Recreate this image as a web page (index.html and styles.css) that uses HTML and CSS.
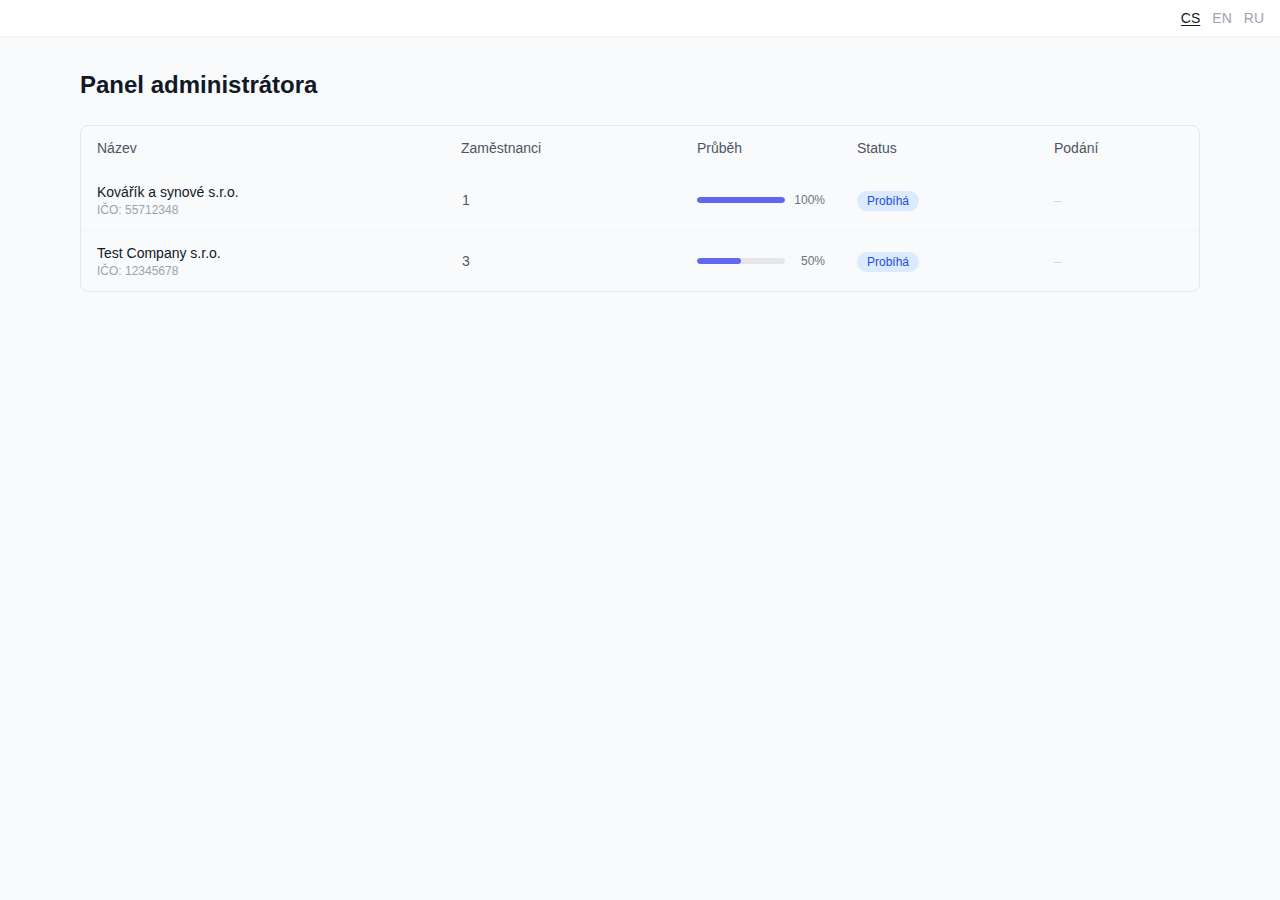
FILE: index.html
```html
<!DOCTYPE html>
<html lang="cs">
<head>
<meta charset="utf-8">
<title>Panel administrátora</title>
<link rel="stylesheet" href="styles.css">
</head>
<body>
<header class="topbar">
  <nav class="langs">
    <a class="lang active">CS</a>
    <a class="lang">EN</a>
    <a class="lang">RU</a>
  </nav>
</header>
<main class="main">
  <h1 class="title">Panel administrátora</h1>
  <div class="card">
    <table class="table">
      <colgroup>
        <col class="c1"><col class="c2"><col class="c3"><col class="c4"><col class="c5">
      </colgroup>
      <thead>
        <tr>
          <th>Název</th>
          <th>Zaměstnanci</th>
          <th>Průběh</th>
          <th>Status</th>
          <th>Podání</th>
        </tr>
      </thead>
      <tbody>
        <tr>
          <td>
            <div class="name">Kovářík a synové s.r.o.</div>
            <div class="ico">IČO: 55712348</div>
          </td>
          <td class="num">1</td>
          <td>
            <div class="progress">
              <div class="track"><div class="fill" style="width:100%"></div></div>
              <span class="pct">100%</span>
            </div>
          </td>
          <td><span class="badge">Probíhá</span></td>
          <td class="dash">–</td>
        </tr>
        <tr>
          <td>
            <div class="name">Test Company s.r.o.</div>
            <div class="ico">IČO: 12345678</div>
          </td>
          <td class="num">3</td>
          <td>
            <div class="progress">
              <div class="track"><div class="fill" style="width:50%"></div></div>
              <span class="pct">50%</span>
            </div>
          </td>
          <td><span class="badge">Probíhá</span></td>
          <td class="dash">–</td>
        </tr>
      </tbody>
    </table>
  </div>
</main>
</body>
</html>
```

FILE: styles.css
```css
* { box-sizing: border-box; }
html, body {
  margin: 0;
  padding: 0;
  background: #f9fafb;
  font-family: "Liberation Sans", Arial, sans-serif;
  color: #111827;
}
body { min-height: 900px; }

.topbar {
  height: 37px;
  background: #ffffff;
  border-bottom: 1px solid #f3f4f6;
  display: flex;
  justify-content: flex-end;
  align-items: center;
  padding: 0 16px;
}
.langs {
  display: flex;
  gap: 12px;
  font-size: 14px;
  line-height: 20px;
}
.lang {
  color: #9ca3af;
  text-decoration: none;
  cursor: pointer;
}
.lang.active {
  color: #111827;
  text-decoration: underline;
  text-underline-offset: 2px;
}

.main {
  max-width: 1120px;
  margin: 0 auto;
  padding-top: 32px;
}
.title {
  margin: 0 0 24px;
  font-size: 24px;
  line-height: 32px;
  font-weight: 700;
  color: #111827;
}

.card {
  border: 1px solid #e5e7eb;
  border-radius: 8px;
  background: #f9fafb;
  overflow: hidden;
}
.table {
  width: 100%;
  border-collapse: collapse;
  table-layout: fixed;
}
.c1 { width: 364px; }
.c2 { width: 236px; }
.c3 { width: 160px; }
.c4 { width: 197px; }

th {
  text-align: left;
  font-weight: 400;
  font-size: 14px;
  line-height: 20px;
  color: #4b5563;
  padding: 12px 16px;
}
td {
  padding: 12px 16px;
  font-size: 14px;
  line-height: 20px;
  vertical-align: middle;
}
tbody tr + tr td { border-top: 1px solid #f3f4f6; }

.name { color: #111827; font-size: 14px; line-height: 20px; }
.ico { color: #9ca3af; font-size: 12px; line-height: 16px; }
.num { color: #4b5563; padding-left: 17px; }

.progress {
  display: flex;
  align-items: center;
  gap: 8px;
}
.track {
  width: 88px;
  height: 6px;
  border-radius: 3px;
  background: #e5e7eb;
  overflow: hidden;
}
.fill {
  height: 100%;
  background: #6366f1;
  border-radius: 3px;
}
.pct {
  width: 32px;
  text-align: right;
  font-size: 12px;
  color: #6b7280;
}

.badge {
  display: inline-block;
  background: #dbeafe;
  color: #1d4ed8;
  font-size: 12px;
  line-height: 20px;
  padding: 0 10px;
  border-radius: 999px;
}
.dash { color: #d1d5db; }
```
